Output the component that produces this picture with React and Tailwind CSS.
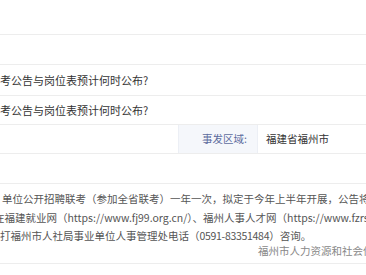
import React from 'react';

const font = { fontFamily: '"Noto Sans CJK SC", "Noto Sans", sans-serif' };

const Divider = () => <div className="h-px bg-[#ededed]" />;

export default function App() {
  return (
    <div className="w-[366px] h-[275px] overflow-hidden bg-white" style={font}>
      {/* empty rows at the top */}
      <div className="h-[34px]" />
      <Divider />
      <div className="h-[29px]" />
      <Divider />

      {/* question rows */}
      <div className="h-[30px] flex items-center text-[11px] text-[#333] whitespace-nowrap">
        考公告与岗位表预计何时公布?
      </div>
      <Divider />
      <div className="h-[28px] flex items-center text-[11px] text-[#333] whitespace-nowrap">
        考公告与岗位表预计何时公布?
      </div>
      <Divider />

      {/* info row */}
      <div className="h-[28px] flex text-[10.5px] whitespace-nowrap">
        <div className="w-[178px]" />
        <div className="w-[80px] bg-[#f5f7fb] border-x border-[#eceff5] flex items-center justify-end pr-[10px] text-[#5d6c9e]">
          事发区域:
        </div>
        <div className="flex items-center pl-[8px] text-[#333]">福建省福州市</div>
      </div>
      <Divider />
      <div className="h-[29px]" />
      <Divider />

      {/* answer paragraph */}
      <div className="h-[79px] pt-[6px] text-[10.5px] leading-[18.5px] text-[#555] whitespace-nowrap">
        <div className="ml-[2px]">单位公开招聘联考（参加全省联考）一年一次，拟定于今年上半年开展，公告将于</div>
        <div className="-ml-[6px]">在福建就业网（https://www.fj99.org.cn/）、福州人事人才网（https://www.fzrsrc.com/）</div>
        <div className="ml-0">
          打福州市人社局事业单位人事管理处电话（<span className="tracking-[-0.3px]">0591-83351484</span>）咨询。
        </div>
        <div className="ml-[258px] leading-[9px] text-[#888]">福州市人力资源和社会保障局</div>
      </div>
      <Divider />
    </div>
  );
}
